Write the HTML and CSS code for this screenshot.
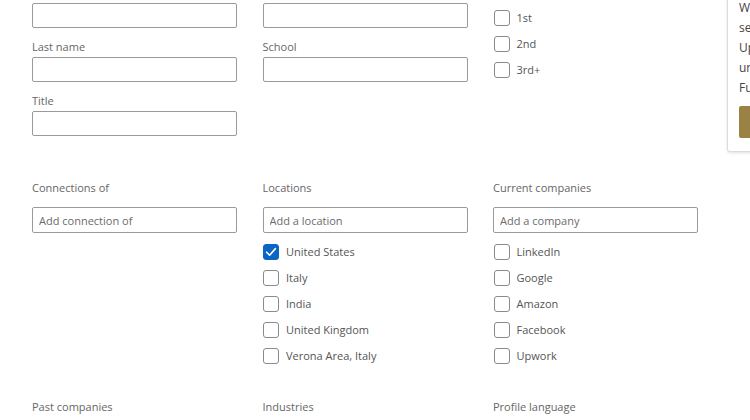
FILE: index.html
```html
<!DOCTYPE html>
<html>
<head>
<meta charset="utf-8">
<link rel="stylesheet" href="styles.css">
</head>
<body>
<div class="page">
  <section class="grid sec1">
    <div class="col">
      <div class="field first"><input class="inp" type="text"></div>
      <div class="field"><label class="flabel">Last name</label><input class="inp" type="text"></div>
      <div class="field"><label class="flabel">Title</label><input class="inp" type="text"></div>
    </div>
    <div class="col">
      <div class="field first"><input class="inp" type="text"></div>
      <div class="field"><label class="flabel">School</label><input class="inp" type="text"></div>
    </div>
    <div class="col checks top">
      <div class="chk"><span class="box"></span><span>1st</span></div>
      <div class="chk"><span class="box"></span><span>2nd</span></div>
      <div class="chk"><span class="box"></span><span>3rd+</span></div>
    </div>
  </section>

  <section class="grid sec2">
    <div class="col">
      <div class="slabel">Connections of</div>
      <input class="inp tall" type="text" placeholder="Add connection of">
    </div>
    <div class="col">
      <div class="slabel">Locations</div>
      <input class="inp tall" type="text" placeholder="Add a location">
      <div class="checks">
        <div class="chk"><span class="box on"><svg viewBox="0 0 16 16" width="16" height="16"><path d="M3.6 8.2 L6.6 11.2 L12.4 4.6" fill="none" stroke="#fff" stroke-width="1.6" stroke-linecap="round" stroke-linejoin="round"/></svg></span><span>United States</span></div>
        <div class="chk"><span class="box"></span><span>Italy</span></div>
        <div class="chk"><span class="box"></span><span>India</span></div>
        <div class="chk"><span class="box"></span><span>United Kingdom</span></div>
        <div class="chk"><span class="box"></span><span>Verona Area, Italy</span></div>
      </div>
    </div>
    <div class="col">
      <div class="slabel">Current companies</div>
      <input class="inp tall" type="text" placeholder="Add a company">
      <div class="checks">
        <div class="chk"><span class="box"></span><span>LinkedIn</span></div>
        <div class="chk"><span class="box"></span><span>Google</span></div>
        <div class="chk"><span class="box"></span><span>Amazon</span></div>
        <div class="chk"><span class="box"></span><span>Facebook</span></div>
        <div class="chk"><span class="box"></span><span>Upwork</span></div>
      </div>
    </div>
  </section>

  <section class="grid sec3">
    <div class="col"><div class="slabel">Past companies</div></div>
    <div class="col"><div class="slabel">Industries</div></div>
    <div class="col"><div class="slabel">Profile language</div></div>
  </section>
</div>

<div class="popup">
  <div class="pline">Want to see more</div>
  <div class="pline">search results?</div>
  <div class="pline">Upgrade for</div>
  <div class="pline">unlimited search.</div>
  <div class="pline">Full access today.</div>
  <div class="pbtn"></div>
</div>
</body>
</html>
```

FILE: styles.css
```css
html, body {
  margin: 0;
  padding: 0;
  background: #fff;
  overflow: hidden;
  width: 750px;
  height: 420px;
}
body {
  font-family: "Open Sans", "Noto Sans", sans-serif;
  font-size: 11px;
  color: #5e5e5e;
  position: relative;
}
.page {
  padding: 3px 0 0 32px;
}
.grid {
  display: grid;
  grid-template-columns: 206px 206px 206px;
  column-gap: 24.5px;
  align-items: start;
}
.col {
  display: flex;
  flex-direction: column;
}
.field {
  display: flex;
  flex-direction: column;
  margin-top: 11px;
}
.field.first {
  margin-top: 0;
}
.flabel {
  line-height: 16px;
  height: 16px;
  margin-bottom: 2px;
  color: #666;
}
.inp {
  box-sizing: border-box;
  width: 205px;
  height: 25px;
  margin: 0;
  border: 1px solid #9a9a9a;
  border-radius: 2px;
  padding: 0 6px;
  font-family: inherit;
  font-size: 11px;
  color: #555;
  background: #fff;
  outline: none;
}
.inp.tall {
  height: 26px;
}
.inp::placeholder {
  color: #6b6b6b;
}
.checks {
  display: flex;
  flex-direction: column;
  gap: 10px;
  margin-top: 11px;
}
.checks.top {
  margin-top: 7px;
  gap: 10px;
}
.chk {
  display: flex;
  align-items: center;
  gap: 7px;
  height: 16px;
  line-height: 16px;
  color: #555;
  padding-left: 0.5px;
}
.box {
  box-sizing: border-box;
  width: 16px;
  height: 16px;
  border: 1px solid #8a8a8a;
  border-radius: 3px;
  background: #fff;
  flex: none;
  display: flex;
}
.box.on {
  background: #0a66c2;
  border-color: #0a66c2;
}
.box.on svg {
  margin: -1px;
}
.sec2 {
  margin-top: 44px;
}
.slabel {
  line-height: 16px;
  height: 16px;
  margin-bottom: 11px;
  color: #666;
}
.sec3 {
  margin-top: 35px;
}
.popup {
  position: absolute;
  left: 727px;
  top: -10px;
  width: 200px;
  height: 162px;
  box-sizing: border-box;
  background: #fff;
  border: 1px solid #dcdcdc;
  border-radius: 3px;
  box-shadow: 0 1px 3px rgba(0,0,0,0.12);
  padding: 7px 0 0 11px;
  font-size: 12px;
  color: #444;
}
.pline {
  line-height: 20px;
  height: 20px;
  white-space: nowrap;
}
.pbtn {
  margin-top: 8px;
  width: 120px;
  height: 32px;
  background: #9a8242;
  border-radius: 2px;
}
```
